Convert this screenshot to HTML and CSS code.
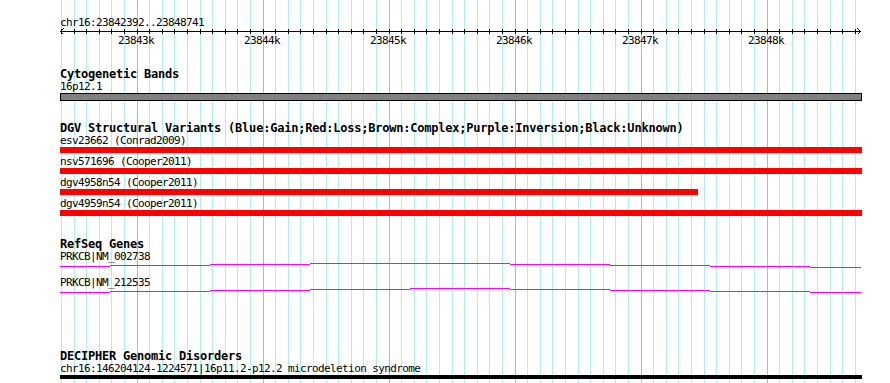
FILE: index.html
```html
<!DOCTYPE html>
<html>
<head>
<meta charset="utf-8">
<title>chr16:23842392..23848741</title>
<link rel="stylesheet" href="styles.css">
</head>
<body>
<div class="panel">
  <svg class="grid" width="890" height="383" viewBox="0 0 890 383">
    <path class="minor" d="M61.5 0V383M74.5 0V383M86.5 0V383M99.5 0V383M111.5 0V383M124.5 0V383M149.5 0V383M162.5 0V383M174.5 0V383M187.5 0V383M200.5 0V383M212.5 0V383M225.5 0V383M237.5 0V383M250.5 0V383M275.5 0V383M288.5 0V383M300.5 0V383M313.5 0V383M326.5 0V383M338.5 0V383M351.5 0V383M363.5 0V383M376.5 0V383M401.5 0V383M414.5 0V383M426.5 0V383M439.5 0V383M452.5 0V383M464.5 0V383M477.5 0V383M489.5 0V383M502.5 0V383M527.5 0V383M540.5 0V383M552.5 0V383M565.5 0V383M578.5 0V383M590.5 0V383M603.5 0V383M615.5 0V383M628.5 0V383M653.5 0V383M666.5 0V383M678.5 0V383M691.5 0V383M704.5 0V383M716.5 0V383M729.5 0V383M741.5 0V383M754.5 0V383M779.5 0V383M792.5 0V383M804.5 0V383M817.5 0V383M830.5 0V383M842.5 0V383M855.5 0V383"/>
    <path class="major" d="M137.5 0V383M263.5 0V383M389.5 0V383M515.5 0V383M641.5 0V383M767.5 0V383"/>
  </svg>

  <div class="content">
    <div class="ruler-label">chr16:23842392..23848741</div>
    <svg class="ruler" width="890" height="20" viewBox="0 0 890 20">
      <path class="axis" d="M60 4.5H861M63.5 1.5L60.5 4.5L63.5 7.5M857.5 1.5L860.5 4.5L857.5 7.5"/>
      <path class="ticks" d="M61.5 2v5M74.5 2v5M86.5 2v5M99.5 2v5M111.5 2v5M124.5 2v5M137.5 2v5M149.5 2v5M162.5 2v5M174.5 2v5M187.5 2v5M200.5 2v5M212.5 2v5M225.5 2v5M237.5 2v5M250.5 2v5M263.5 2v5M275.5 2v5M288.5 2v5M300.5 2v5M313.5 2v5M326.5 2v5M338.5 2v5M351.5 2v5M363.5 2v5M376.5 2v5M389.5 2v5M401.5 2v5M414.5 2v5M426.5 2v5M439.5 2v5M452.5 2v5M464.5 2v5M477.5 2v5M489.5 2v5M502.5 2v5M515.5 2v5M527.5 2v5M540.5 2v5M552.5 2v5M565.5 2v5M578.5 2v5M590.5 2v5M603.5 2v5M615.5 2v5M628.5 2v5M641.5 2v5M653.5 2v5M666.5 2v5M678.5 2v5M691.5 2v5M704.5 2v5M716.5 2v5M729.5 2v5M741.5 2v5M754.5 2v5M767.5 2v5M779.5 2v5M792.5 2v5M804.5 2v5M817.5 2v5M830.5 2v5M842.5 2v5M855.5 2v5"/>
      <text x="136" y="17">23843k</text>
      <text x="262" y="17">23844k</text>
      <text x="388" y="17">23845k</text>
      <text x="514" y="17">23846k</text>
      <text x="640" y="17">23847k</text>
      <text x="766" y="17">23848k</text>
    </svg>

    <section class="track cyto">
      <div class="title">Cytogenetic Bands</div>
      <div class="label">16p12.1</div>
      <div class="band"></div>
    </section>

    <section class="track dgv">
      <div class="title">DGV Structural Variants (Blue:Gain;Red:Loss;Brown:Complex;Purple:Inversion;Black:Unknown)</div>
      <div class="feature">
        <div class="label">esv23662 (Conrad2009)</div>
        <div class="bar loss"></div>
      </div>
      <div class="feature">
        <div class="label">nsv571696 (Cooper2011)</div>
        <div class="bar loss"></div>
      </div>
      <div class="feature">
        <div class="label">dgv4958n54 (Cooper2011)</div>
        <div class="bar loss" style="width:638px"></div>
      </div>
      <div class="feature">
        <div class="label">dgv4959n54 (Cooper2011)</div>
        <div class="bar loss"></div>
      </div>
    </section>

    <section class="track refseq">
      <div class="title">RefSeq Genes</div>
      <div class="gene">
        <div class="label">PRKCB|NM_002738</div>
        <svg class="gene-line" width="890" height="13" viewBox="0 0 890 13">
          <path d="M60 3.5H110M110 2.5H210M210 1.5H310M310 0.5H410M410 0.5H510M510 1.5H610M610 2.5H710M710 3.5H810M810 4.5H861"/>
        </svg>
      </div>
      <div class="gene">
        <div class="label">PRKCB|NM_212535</div>
        <svg class="gene-line" width="890" height="13" viewBox="0 0 890 13">
          <path d="M60 3.5H110M110 2.5H210M210 1.5H310M310 0.5H410M410 -0.5H510M510 0.5H610M610 1.5H710M710 2.5H810M810 3.5H861"/>
        </svg>
      </div>
    </section>

    <section class="track decipher">
      <div class="title">DECIPHER Genomic Disorders</div>
      <div class="label">chr16:146204124-1224571|16p11.2-p12.2 microdeletion syndrome</div>
      <div class="bar disorder"></div>
    </section>
  </div>
</div>
</body>
</html>
```

FILE: styles.css
```css
html, body {
  margin: 0;
  padding: 0;
  background: #ffffff;
}

.panel {
  position: relative;
  width: 890px;
  height: 383px;
  overflow: hidden;
  background: #ffffff;
  font-family: "DejaVu Sans Mono", "Liberation Mono", monospace;
  color: #000000;
}

.grid {
  position: absolute;
  left: 0;
  top: 0;
  z-index: 0;
  shape-rendering: crispEdges;
}

.grid path {
  fill: none;
  stroke-width: 1;
}

.grid .minor {
  stroke: #afeeee;
}

.grid .major {
  stroke: #8fc4e2;
}

.content {
  position: relative;
  z-index: 1;
  display: flex;
  flex-direction: column;
}

.ruler-label,
.label {
  font-size: 11px;
  letter-spacing: -0.62px;
  line-height: 13px;
  height: 13px;
  padding-left: 60px;
  white-space: nowrap;
}

.ruler-label {
  margin-top: 16px;
}

.ruler {
  display: block;
  margin-top: -2px;
  overflow: visible;
}

.ruler path {
  fill: none;
  stroke: #000000;
  stroke-width: 1;
  shape-rendering: crispEdges;
}

.ruler text {
  font-family: "DejaVu Sans Mono", "Liberation Mono", monospace;
  font-size: 11px;
  letter-spacing: -0.62px;
  text-anchor: middle;
  fill: #000000;
}

.track {
  display: flex;
  flex-direction: column;
}

.title {
  font-size: 12px;
  letter-spacing: -0.22px;
  font-weight: bold;
  line-height: 12px;
  height: 12px;
  padding-left: 60px;
  white-space: nowrap;
}

.cyto {
  margin-top: 21px;
}

.band {
  box-sizing: border-box;
  margin-left: 60px;
  width: 802px;
  height: 8px;
  border: 1px solid #000000;
  background: #808080;
}

.dgv {
  margin-top: 21px;
}

.feature + .feature {
  margin-top: 2px;
}

.bar {
  margin-left: 60px;
  width: 802px;
  height: 6px;
}

.bar.loss {
  background: #ff0000;
}

.refseq {
  margin-top: 22px;
}

.gene-line {
  display: block;
  overflow: visible;
}

.gene-line path {
  fill: none;
  stroke: #ff00ff;
  stroke-width: 1;
  shape-rendering: crispEdges;
}

.decipher {
  margin-top: 48px;
}

.bar.disorder {
  height: 4px;
  background: #000000;
}
```
